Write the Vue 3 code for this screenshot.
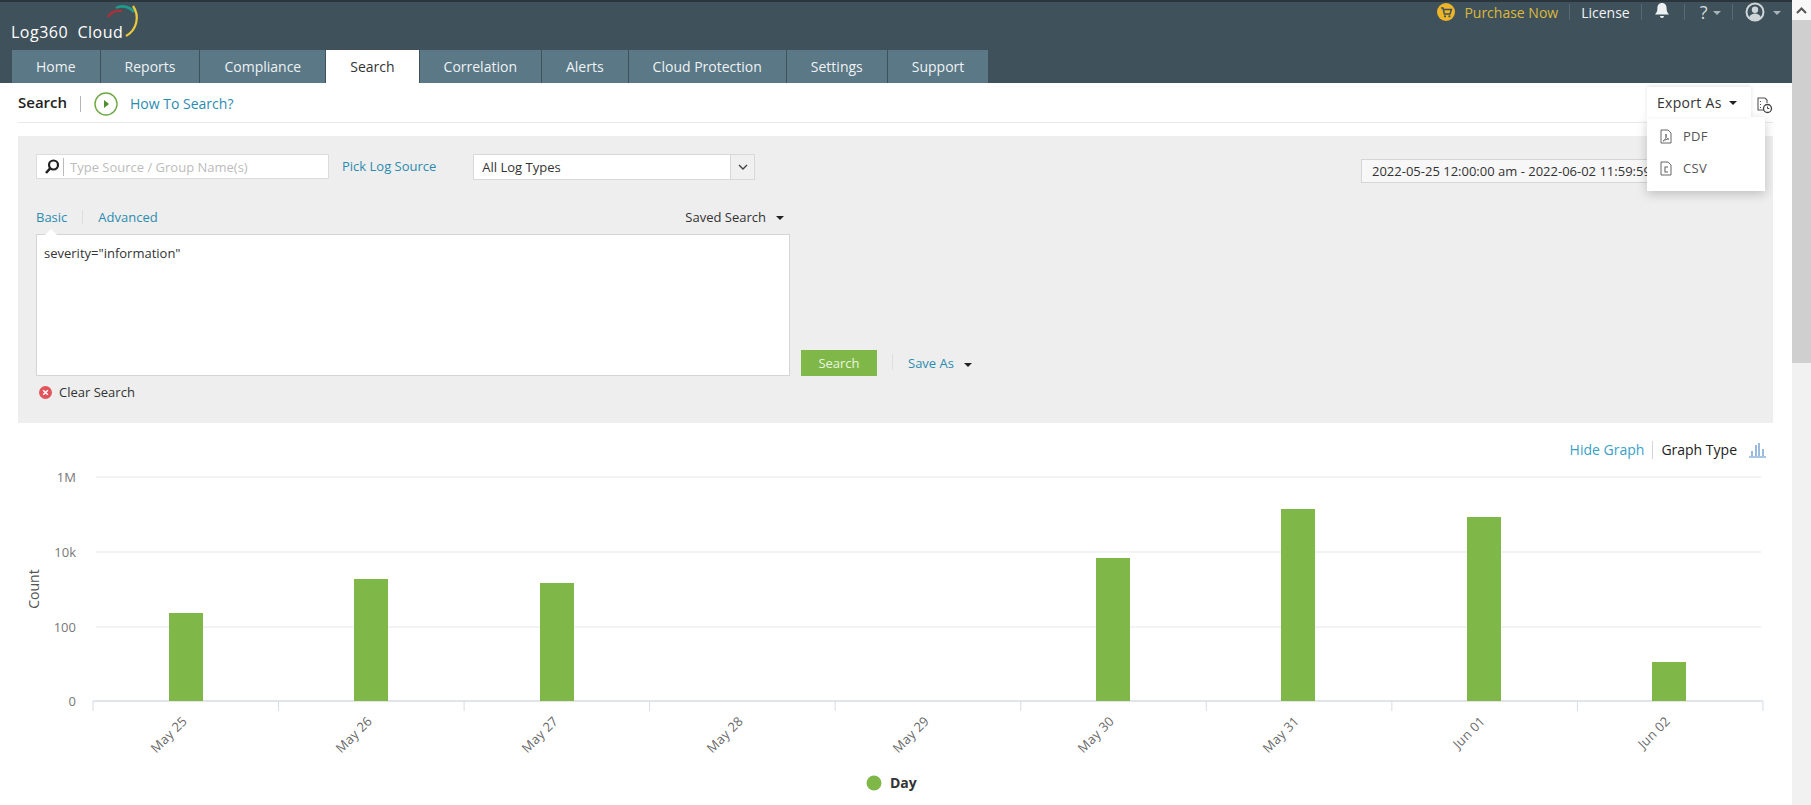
<script setup>
const tabs = ['Home', 'Reports', 'Compliance', 'Search', 'Correlation', 'Alerts', 'Cloud Protection', 'Settings', 'Support']
const yAxis = [
  { label: '1M', y: 7 },
  { label: '10k', y: 82 },
  { label: '100', y: 157 },
  { label: '0', y: 231 }
]
const gridLines = yAxis.slice(0, 3)
const baseY = 231
const bars = [
  { label: 'May 25', x: 169, top: 143 },
  { label: 'May 26', x: 354, top: 109 },
  { label: 'May 27', x: 540, top: 113 },
  { label: 'May 28', x: 725, top: null },
  { label: 'May 29', x: 911, top: null },
  { label: 'May 30', x: 1096, top: 88 },
  { label: 'May 31', x: 1281, top: 39 },
  { label: 'Jun 01', x: 1467, top: 47 },
  { label: 'Jun 02', x: 1652, top: 192 }
]
const ticks = Array.from({ length: 10 }, (_, i) => 93 + i * 185.55)
</script>

<template>
  <div class="page">
    <div class="main">
      <header class="header">
        <div class="top-row">
          <div class="logo">
            <span class="logo-text">Log360&nbsp; Cloud</span>
            <svg class="logo-mark" width="40" height="36" viewBox="0 0 40 36">
              <path d="M7 14 C10 9 15 7 21 8" fill="none" stroke="#a8323a" stroke-width="2.600" />
              <path d="M15 5 C20 2 28 3 33 9" fill="none" stroke="#1f9a8c" stroke-width="2.600" />
              <path d="M32 3 C39 13 36 27 25 33" fill="none" stroke="#ecc93c" stroke-width="2.200" />
            </svg>
          </div>
          <nav class="top-links">
            <svg class="cart" width="18" height="18" viewBox="0 0 18 18">
              <circle cx="9" cy="9" r="9" fill="#eeb528" />
              <path d="M4 5h2l1.400 6h5.600l1.400-4.500H6.400" fill="none" stroke="#3f515a" stroke-width="1.500" />
              <circle cx="8" cy="13.300" r="1.100" fill="#3f515a" />
              <circle cx="12.400" cy="13.300" r="1.100" fill="#3f515a" />
            </svg>
            <span class="purchase">Purchase Now</span>
            <i class="top-sep"></i>
            <span class="license">License</span>
            <i class="top-sep"></i>
            <svg class="bell" width="16" height="18" viewBox="0 0 16 18">
              <path d="M8 1c3 0 4.600 2.200 4.600 5.200 0 3.300 1 4.700 2.400 6.300H1c1.400-1.600 2.400-3 2.400-6.300C3.400 3.200 5 1 8 1z" fill="#eef1f2" />
              <path d="M6 14h4a2 2 0 0 1-4 0z" fill="#eef1f2" />
            </svg>
            <i class="top-sep"></i>
            <span class="help">?</span>
            <i class="mini-caret"></i>
            <i class="top-sep"></i>
            <svg class="user" width="20" height="20" viewBox="0 0 20 20">
              <circle cx="10" cy="10" r="8.500" fill="none" stroke="#cfd6d9" stroke-width="2" />
              <circle cx="10" cy="7.800" r="3.200" fill="#cfd6d9" />
              <path d="M4 15.500c1.500-3 3.500-4 6-4s4.500 1 6 4c-1.500 1.700-3.500 2.500-6 2.500s-4.500-.8-6-2.500z" fill="#cfd6d9" />
            </svg>
            <i class="mini-caret user-caret"></i>
          </nav>
        </div>
        <div class="tabs">
          <span v-for="t in tabs" :key="t" class="tab" :class="{ active: t === 'Search' }">{{ t }}</span>
        </div>
      </header>

      <section class="subbar">
        <h1 class="title">Search</h1>
        <i class="sub-sep"></i>
        <svg class="play" width="24" height="24" viewBox="0 0 24 24">
          <circle cx="12" cy="12" r="11" fill="#fff" stroke="#6ea845" stroke-width="1.400" />
          <path d="M10 8l5 4-5 4z" fill="#4f8f2c" />
        </svg>
        <a class="howto">How To Search?</a>
        <div class="actions">
          <div class="export">
            <div class="export-btn">Export As <i class="caret dark"></i></div>
            <div class="export-menu">
              <div class="menu-item">
                <svg width="12" height="15" viewBox="0 0 12 15">
                  <path d="M1 1h7l3 3v10H1z" fill="none" stroke="#666" stroke-width="1" />
                  <path d="M3 12c2-1 4-4 3-7-1 3 1 5 3 5-2 0-4 1-6 2z" fill="none" stroke="#666" stroke-width=".9" />
                </svg>
                <span>PDF</span>
              </div>
              <div class="menu-item">
                <svg width="12" height="15" viewBox="0 0 12 15">
                  <path d="M1 1h7l3 3v10H1z" fill="none" stroke="#666" stroke-width="1" />
                  <path d="M8 6H5v5h3" fill="none" stroke="#666" stroke-width="1.100" />
                </svg>
                <span>CSV</span>
              </div>
            </div>
          </div>
          <svg class="schedule" width="17" height="17" viewBox="0 0 17 17">
            <path d="M9 13H2V1h7l2 2v3" fill="none" stroke="#555" stroke-width="1.100" />
            <path d="M4 4.500h1M4 7.500h1M4 10.500h1" stroke="#555" stroke-width="1.100" />
            <circle cx="11.500" cy="11.500" r="4" fill="#fff" stroke="#444" stroke-width="1.300" />
            <path d="M11.500 9.500v2h1.800" fill="none" stroke="#444" stroke-width="1" />
          </svg>
        </div>
      </section>

      <section class="panel">
        <div class="filters">
          <div class="source">
            <svg class="mag" width="16" height="16" viewBox="0 0 16 16">
              <circle cx="9.500" cy="6" r="4.500" fill="none" stroke="#222" stroke-width="2.200" />
              <path d="M6 9.500L2 14" stroke="#222" stroke-width="2.600" />
            </svg>
            <span class="placeholder">Type Source / Group Name(s)</span>
          </div>
          <a class="link pick">Pick Log Source</a>
          <div class="select">
            <span class="select-value">All Log Types</span>
            <span class="select-btn">
              <svg width="10" height="7" viewBox="0 0 10 7"><path d="M1 1l4 4 4-4" fill="none" stroke="#444" stroke-width="1.400" /></svg>
            </span>
          </div>
          <div class="date">2022-05-25 12:00:00 am - 2022-06-02 11:59:59 pm</div>
        </div>

        <div class="query">
          <div class="query-left">
            <div class="query-tabs">
              <a class="link">Basic</a>
              <i class="q-sep"></i>
              <a class="link">Advanced</a>
              <span class="saved">Saved Search <i class="caret dark"></i></span>
            </div>
            <div class="query-box">
              <i class="notch"></i>
              severity="information"
            </div>
          </div>
          <button class="search-btn">Search</button>
          <i class="q-sep tall"></i>
          <a class="link saveas">Save As</a>
          <i class="caret dark save-caret"></i>
        </div>

        <div class="clear">
          <svg width="13" height="13" viewBox="0 0 13 13">
            <circle cx="6.500" cy="6.500" r="6.500" fill="#e2545b" />
            <path d="M4.200 4.200l4.600 4.600M8.800 4.200l-4.600 4.600" stroke="#fff" stroke-width="1.500" />
          </svg>
          <span>Clear Search</span>
        </div>
      </section>

      <section class="graph">
        <div class="graph-tools">
          <a class="link hide">Hide Graph</a>
          <i class="graph-sep"></i>
          <span class="gtype">Graph Type</span>
          <svg width="19" height="16" viewBox="0 0 19 16">
            <path d="M1 15h17" stroke="#6f9fd0" stroke-width="1.200" />
            <path d="M4 14V9M8 14V3M11 14V1M15 14V7" stroke="#6f9fd0" stroke-width="1.400" />
          </svg>
        </div>
        <svg class="chart" width="1792" height="335" viewBox="0 0 1792 335">
          <line v-for="g in gridLines" :key="g.label" x1="96" x2="1761" :y1="g.y" :y2="g.y" stroke="#eceff2" stroke-width="1.500" />
          <line x1="93" x2="1763" :y1="baseY" :y2="baseY" stroke="#d7dce3" stroke-width="1.500" />
          <line v-for="t in ticks" :key="t" :x1="t" :x2="t" :y1="baseY" :y2="baseY + 10" stroke="#d7dce3" stroke-width="1" />
          <template v-for="b in bars" :key="b.label">
            <rect v-if="b.top !== null" :x="b.x" :y="b.top" width="34" :height="baseY - b.top" fill="#7fb849" />
            <text class="xlabel" text-anchor="end" :transform="`translate(${b.x + 19} ${baseY + 21}) rotate(-45)`">{{ b.label }}</text>
          </template>
          <text v-for="a in yAxis" :key="a.label" class="ylabel" x="76" :y="a.y + 5" text-anchor="end">{{ a.label }}</text>
          <text class="axis-title" text-anchor="middle" transform="translate(39 119) rotate(-90)">Count</text>
          <circle cx="874" cy="313" r="7.500" fill="#7fb849" />
          <text class="legend" x="890" y="318">Day</text>
        </svg>
      </section>
    </div>

    <aside class="scrollbar">
      <div class="scroll-up">
        <svg width="11" height="7" viewBox="0 0 11 7"><path d="M1 6l4.500-4.500L10 6" fill="none" stroke="#555" stroke-width="2" /></svg>
      </div>
      <div class="scroll-thumb"></div>
    </aside>
  </div>
</template>

<style>
html, body { margin: 0; background: #fff; }
</style>

<style scoped>
.page {
  width: 1811px;
  height: 805px;
  display: flex;
  overflow: hidden;
  font-family: "Open Sans", "Noto Sans", sans-serif;
  font-size: 13px;
  color: #333;
  background: #fff;
}
.main { width: 1792px; flex: none; }
i { font-style: normal; display: block; }

.header {
  height: 83px;
  box-sizing: border-box;
  background: #3f515a;
  border-top: 2px solid #2b363c;
  display: flex;
  flex-direction: column;
}
.top-row {
  height: 48px;
  display: flex;
  justify-content: space-between;
  align-items: flex-start;
  padding-right: 11px;
}
.logo { display: flex; align-items: flex-start; padding: 1px 0 0 11px; }
.logo-text { color: #fff; font-size: 16px; letter-spacing: .5px; margin-top: 18px; white-space: nowrap; }
.logo-mark { margin-left: -22px; margin-top: 0; }
.top-links { display: flex; align-items: center; height: 20px; color: #fff; }
.purchase { color: #dcb83c; margin-left: 9px; font-size: 14px; }
.license { color: #f2f4f5; font-size: 14px; }
.top-sep { width: 1px; height: 16px; background: #566a74; margin: 0 11px; }
.help { color: #d5dadd; font-size: 18px; margin-left: 4px; line-height: 20px; }
.bell { margin: 0 3px 2px 1px; }
.user { margin-left: 1px; }
.mini-caret {
  width: 0; height: 0; margin-left: 5px; margin-top: 2px;
  border-left: 4px solid transparent; border-right: 4px solid transparent; border-top: 4px solid #aab4b9;
}
.user-caret { margin-left: 8.500px; }

.tabs { display: flex; gap: 1px; margin-left: 12px; height: 33px; }
.tab {
  display: flex; align-items: center; padding: 0 24px;
  background: #5a7885; color: #eef2f4; font-size: 14px; white-space: nowrap;
}
.tab.active { background: #fff; color: #333; }

.subbar {
  height: 40px;
  box-sizing: border-box;
  margin: 0 19px 0 18px;
  border-bottom: 1px solid #e9e9e9;
  display: flex;
  align-items: center;
}
.title { margin: -2px 0 0; font-size: 15px; font-weight: 600; color: #222; }
.sub-sep { width: 1px; height: 16px; background: #b5b5b5; margin: 2px 13px 0 13px; }
.play { margin-top: 2px; }
.howto { color: #2b8cb0; font-size: 14px; margin-left: 12px; margin-top: 2px; }
.actions { margin-left: auto; display: flex; align-items: flex-start; height: 100%; }
.export { position: relative; margin-top: 4px; width: 104px; }
.export-btn {
  height: 30px; box-sizing: border-box; display: flex; align-items: center; padding-left: 10px;
  font-size: 14px; letter-spacing: .3px; background: #fff; position: relative; z-index: 2; color: #333;
  box-shadow: 0 -1px 4px rgba(0,0,0,.12);
}
.caret {
  width: 0; height: 0; margin-left: 6px; margin-top: 2px;
  border-left: 4px solid transparent; border-right: 4px solid transparent; border-top: 4px solid #222;
}
.export-btn .caret { margin-left: 7px; }
.export-menu {
  position: absolute; left: 0; top: 30px; width: 118px; height: 74px; box-sizing: border-box;
  padding-top: 3px; background: #fff; z-index: 1; box-shadow: 0 3px 10px rgba(0,0,0,.2);
}
.menu-item {
  height: 32px; display: flex; align-items: center; gap: 11px; padding-left: 13px;
  font-size: 13px; letter-spacing: .3px; color: #555;
}
.schedule { margin: 14px 0 0 5px; }

.panel {
  margin: 13px 19px 0 18px;
  height: 287px;
  box-sizing: border-box;
  padding: 18px 0 0 18px;
  background: #eeeeee;
}
.filters { display: flex; align-items: flex-start; height: 26px; }
.source {
  width: 293px; height: 25px; box-sizing: border-box; background: #fff; border: 1px solid #dcdcdc;
  display: flex; align-items: center;
}
.mag { margin: 0 3px 0 7px; }
.placeholder { color: #bcbcbc; font-size: 13px; border-left: 1px solid #bbb; padding-left: 6px; white-space: nowrap; }
.link { color: #2b8cb0; font-size: 13px; }
.pick { margin: 3px 0 0 13px; }
.select { margin-left: 37px; display: flex; height: 26px; }
.select-value {
  width: 258px; box-sizing: border-box; background: #fff; border: 1px solid #d8d8d8;
  display: flex; align-items: center; padding-left: 8px; font-size: 13px;
}
.select-btn {
  width: 24px; background: #f0f0f0; border: 1px solid #d8d8d8; border-left: 0; box-sizing: border-box;
  display: flex; align-items: center; justify-content: center;
}
.date {
  margin: 5px 83px 0 auto; flex: none;
  width: 329px; height: 24px; box-sizing: border-box; padding-left: 10px;
  background: #f7f7f7; border: 1px solid #d5d5d5;
  display: flex; align-items: center; font-size: 13px; white-space: nowrap;
}

.query { display: flex; align-items: flex-end; margin-top: 0; }
.query-left { width: 754px; }
.query-tabs { height: 54px; display: flex; align-items: center; padding-top: 19px; box-sizing: border-box; }
.q-sep { width: 1px; height: 14px; background: #dedede; margin: 0 15px; }
.saved { margin-left: auto; margin-right: 6px; display: flex; align-items: center; font-size: 13px; color: #333; }
.saved .caret { margin-left: 10px; }
.query-box {
  position: relative; height: 142px; box-sizing: border-box; padding: 9px 7px; background: #fff;
  border: 1px solid #d5d5d5; font-size: 13px; color: #333;
}
.notch {
  position: absolute; left: 8px; top: -6px; width: 0; height: 0;
  border-left: 6px solid transparent; border-right: 6px solid transparent; border-bottom: 6px solid #fff;
}
.search-btn {
  margin-left: 11px; width: 76px; height: 26px; padding: 0; border: 0; background: #7fb849;
  color: #eaf5df; font: inherit; font-size: 13px;
}
.q-sep.tall { height: 16px; margin: 0 0 6px 15px; }
.saveas { margin: 0 0 4px 15px; }
.save-caret { margin: 0 0 9px 10px; }
.clear { display: flex; align-items: center; gap: 7px; margin: 7px 0 0 3px; font-size: 13px; }

.graph { height: 382px; }
.graph-tools {
  height: 47px; box-sizing: border-box; padding: 6px 25px 0 0;
  display: flex; align-items: center; justify-content: flex-end;
}
.hide { font-size: 14px; color: #3aa0c8; }
.graph-sep { width: 1px; height: 18px; background: #d5d5d5; margin: 0 8px; }
.gtype { font-size: 14px; color: #222; margin-right: 11px; }
.chart { display: block; }
.xlabel { font-size: 13px; fill: #6a6a6a; font-family: "Open Sans", sans-serif; letter-spacing: .2px; }
.ylabel { font-size: 13px; fill: #777; font-family: "Open Sans", sans-serif; }
.axis-title { font-size: 14px; fill: #555; font-family: "Open Sans", sans-serif; }
.legend { font-size: 14px; font-weight: 700; fill: #333; font-family: "Open Sans", sans-serif; }

.scrollbar { width: 19px; flex: none; background: #f1f1f1; display: flex; flex-direction: column; }
.scroll-up { height: 20px; background: #f8f8f8; display: flex; align-items: center; justify-content: center; }
.scroll-thumb { height: 343px; background: #cfcfcf; }
</style>
